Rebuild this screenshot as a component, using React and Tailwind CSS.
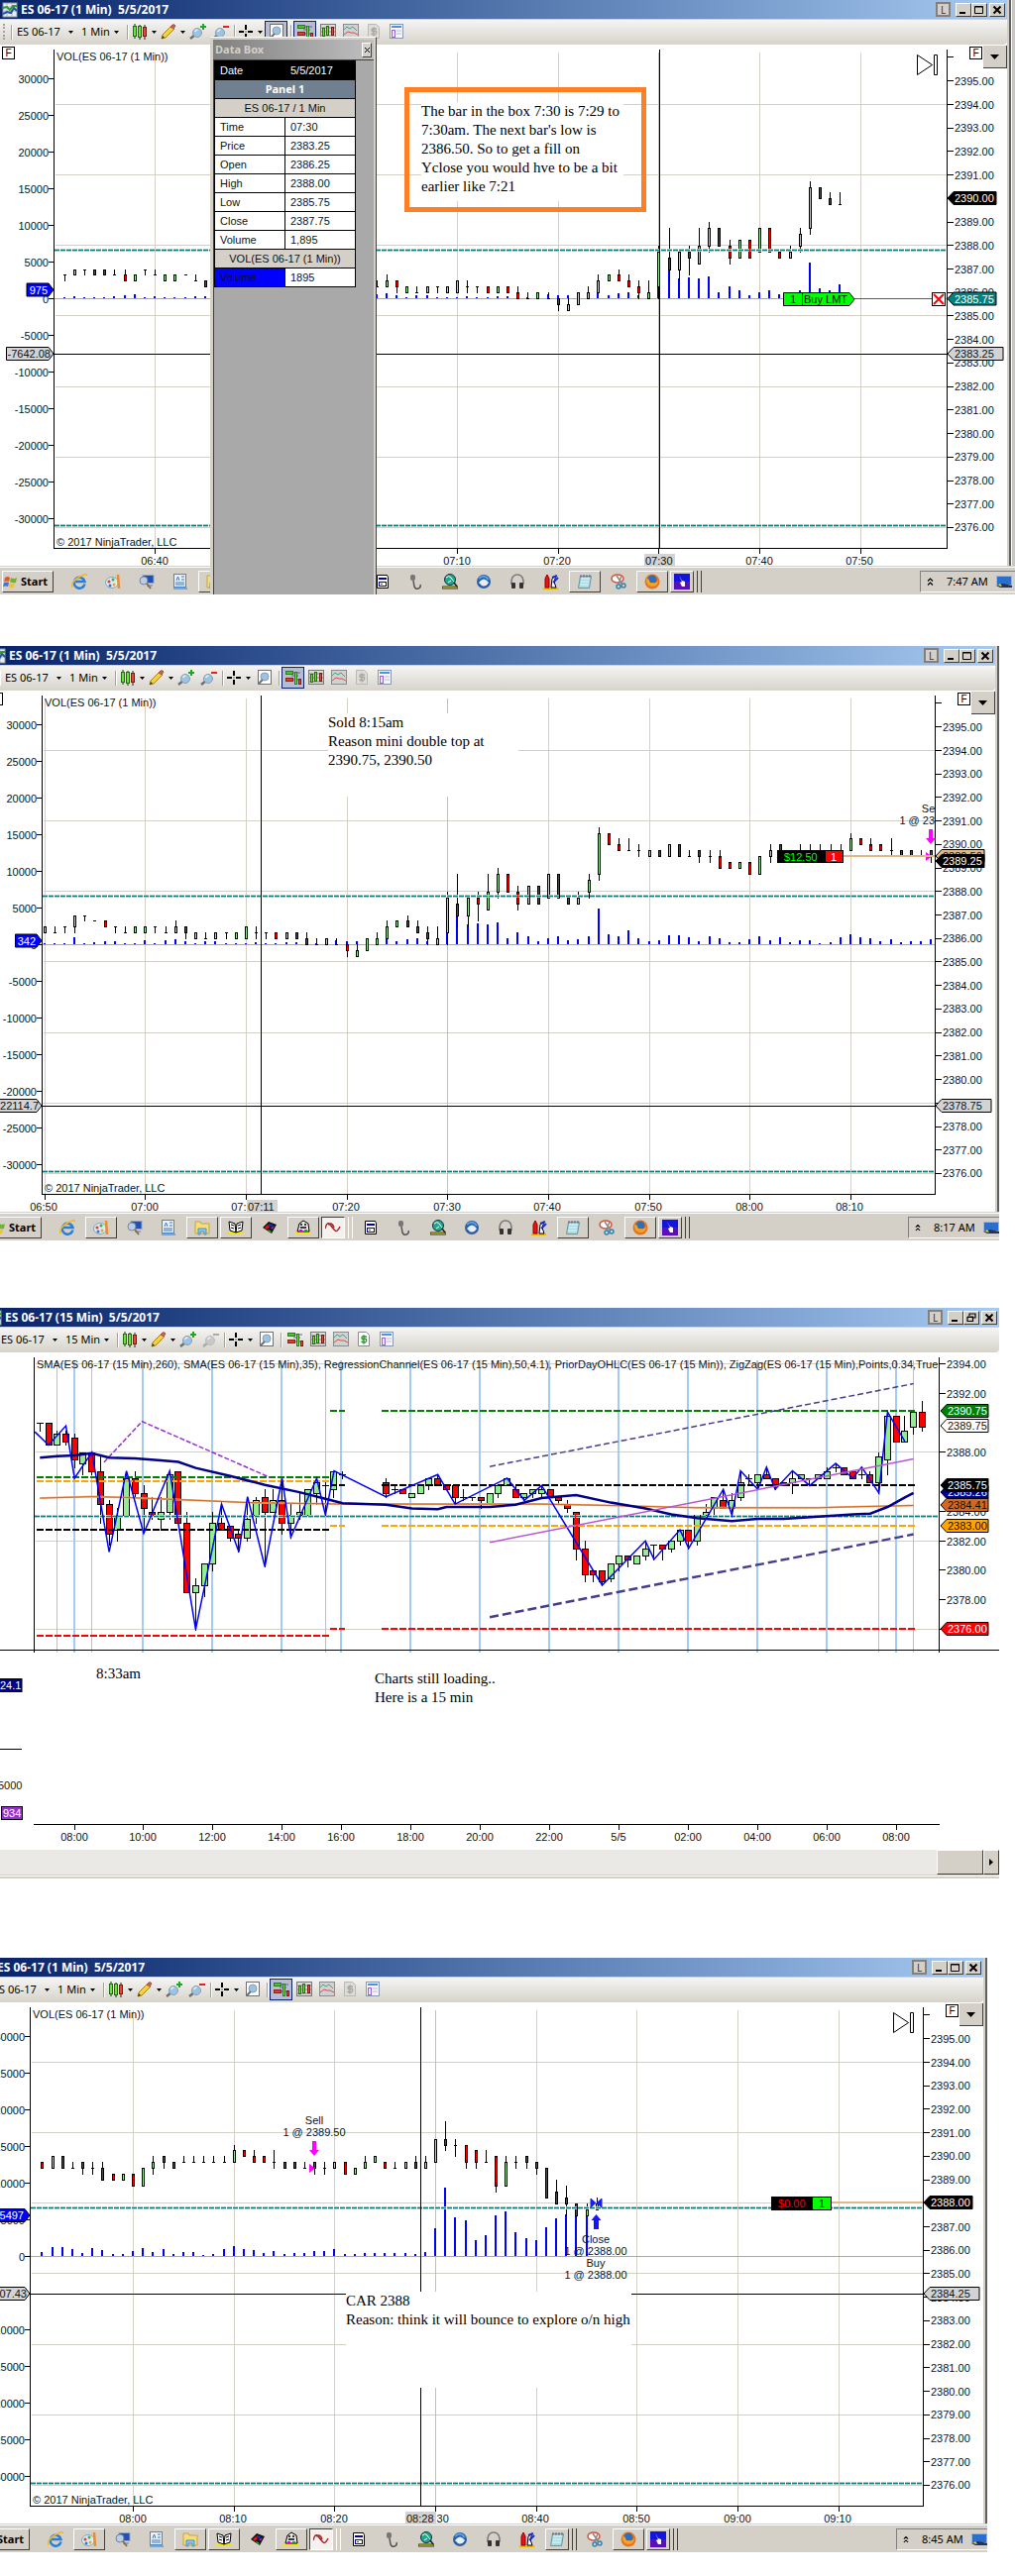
import React from "react";

// ---------------------------------------------------------------- data

// one minute bars, 06:31 - 08:46: [open, high, low, close, volume height], prices above 2380
const START = 391;
const minuteBars = [
  [6.75, 6.75, 6.5, 6.75, 1], [6.75, 7, 6.75, 7, 2], [7, 7, 6.75, 7, 1], [7, 7, 6.75, 6.75, 1], [7, 7, 6.75, 6.75, 1],
  [6.75, 7, 6.75, 6.75, 2], [6.75, 7, 6.5, 6.5, 3], [6.5, 6.75, 6.5, 6.75, 4], [7, 7, 6.75, 7, 1], [6.75, 7, 6.75, 6.75, 2],
  [6.5, 6.75, 6.5, 6.75, 1], [6.5, 6.75, 6.5, 6.75, 1], [6.75, 6.75, 6.75, 6.75, 1], [6.5, 6.75, 6.5, 6.5, 2], [6.5, 6.5, 6.25, 6.25, 2],
  [6.25, 6.5, 6.25, 6.5, 1], [6.5, 6.5, 6.25, 6.25, 1], [6.25, 6.5, 6.25, 6.5, 1], [6.5, 6.5, 6.25, 6.25, 1], [6.25, 6.5, 6.25, 6.5, 1],
  [6.25, 6.5, 6.25, 6.25, 1], [6.5, 6.5, 6.25, 6.5, 1], [6.5, 7, 6.25, 7, 7], [7, 7, 6.75, 7, 1], [6.75, 6.75, 6.75, 6.75, 2],
  [6.75, 6.75, 6.5, 6.5, 3], [6.5, 6.5, 6.25, 6.5, 3], [6.25, 6.5, 6.25, 6.25, 1], [6.25, 6.5, 6.25, 6.5, 1], [6.25, 6.5, 6.25, 6.5, 4],
  [6.5, 6.5, 6.25, 6.5, 1], [6.25, 6.5, 6.25, 6.25, 4], [6.25, 6.75, 6.25, 6.5, 5], [6.5, 6.5, 6, 6.25, 3], [6, 6.25, 6, 6.25, 1],
  [6, 6.25, 6, 6, 3], [6, 6.25, 6, 6.25, 3], [6.25, 6.25, 6, 6.25, 1], [6, 6.25, 6, 6.25, 1], [6, 6.5, 6, 6.5, 1],
  [6.25, 6.5, 6, 6.25, 2], [6.25, 6.25, 6, 6.25, 1], [6.25, 6.25, 6, 6, 1], [6, 6.25, 6, 6.25, 2], [6.25, 6.25, 6, 6, 2],
  [6, 6.25, 5.75, 5.75, 1], [5.75, 6, 5.75, 5.75, 1], [5.75, 6, 5.75, 6, 1], [5.75, 6, 5.75, 5.75, 4], [5.75, 5.75, 5.25, 5.5, 3],
  [5.25, 5.75, 5.25, 5.5, 3], [5.5, 6, 5.5, 6, 3], [5.75, 6.25, 5.75, 6, 3], [6, 6.75, 6, 6.5, 5], [6.5, 6.75, 6.5, 6.75, 3],
  [6.75, 7, 6.5, 6.5, 5], [6.5, 6.75, 6.25, 6.25, 6], [6.25, 6.5, 5.75, 6, 3], [5.75, 6.5, 5.75, 6, 3], [6.25, 8, 5.75, 7.75, 11],
  [7.5, 8.75, 6.5, 7, 29], [7, 7.75, 6.5, 7.75, 20], [7.75, 8, 6.75, 7.5, 21], [7.25, 8.75, 7.25, 8, 20], [8, 9, 7.75, 8.75, 22],
  [8.75, 8.75, 8, 8, 6], [8, 8.25, 7.25, 7.5, 12], [7.5, 8.25, 7.5, 8.25, 8], [8.25, 8.25, 7.5, 7.5, 3], [7.75, 8.75, 7.75, 8.75, 6],
  [8.75, 8.75, 7.75, 7.75, 8], [7.75, 7.75, 7.5, 7.5, 4], [7.5, 8, 7.5, 7.75, 5], [8, 8.75, 7.75, 8.5, 8], [8.75, 10.75, 8.5, 10.5, 36],
  [10.5, 10.5, 10, 10, 10], [10, 10.25, 9.75, 9.75, 8], [9.75, 10.25, 9.75, 9.75, 14], [9.75, 10, 9.5, 9.75, 6], [9.5, 9.75, 9.5, 9.75, 3],
  [9.75, 9.75, 9.5, 9.5, 4], [9.5, 10, 9.5, 10, 9], [10, 10, 9.5, 9.5, 9], [9.5, 9.75, 9.5, 9.5, 7], [9.75, 9.75, 9.25, 9.5, 3],
  [9.5, 9.75, 9.25, 9.5, 8], [9.5, 9.75, 9, 9, 6], [9.25, 9.25, 9, 9, 2], [9, 9.25, 9, 9.25, 2], [9.25, 9.25, 8.75, 8.75, 5],
  [8.75, 9.5, 8.75, 9.5, 8], [9.5, 10, 9.25, 9.75, 4], [10, 10, 9.5, 9.75, 7], [9.75, 9.75, 9.5, 9.5, 2], [9.75, 10, 9.75, 9.75, 4],
  [9.75, 10, 9.75, 9.75, 4], [9.75, 10, 9.75, 9.75, 1], [9.75, 10, 9.75, 9.75, 2], [9.75, 10, 9.75, 9.75, 7], [9.75, 10.5, 9.75, 10.25, 10],
  [10.25, 10.25, 10, 10, 7], [10, 10.25, 9.75, 9.75, 6], [10, 10, 9.75, 9.75, 3], [9.75, 10.25, 9.5, 9.75, 5], [9.75, 9.75, 9.5, 9.5, 2],
  [9.75, 9.75, 9.5, 9.5, 3], [9.5, 9.75, 9.5, 9.5, 3], [9.75, 9.75, 9.25, 9.5, 5], [9.5, 9.75, 9.25, 9.5, 5], [9.5, 9.75, 9.5, 9.75, 7],
  [9.75, 9.75, 9.25, 9.25, 2], [9.25, 9.5, 9.25, 9.5, 2], [9.5, 10, 9.5, 9.75, 3], [9.75, 10, 9.75, 10, 3], [9.75, 9.75, 9.5, 9.5, 3],
  [9.5, 9.75, 9.5, 9.5, 3], [9.5, 9.75, 9.5, 9.75, 3], [9.75, 10, 9.5, 9.5, 2], [9.5, 10, 9.5, 9.75, 4], [9.75, 10.75, 9.75, 10.75, 28],
  [10.75, 11.5, 10.25, 10.5, 69], [10.5, 10.75, 10, 10.5, 39], [10.5, 10.5, 9.5, 9.75, 36], [10.25, 10.25, 9.5, 9.75, 16], [9.75, 10.25, 9.75, 9.75, 21],
  [10, 10, 8.5, 8.75, 41], [8.75, 10, 8.75, 9.75, 45], [9.75, 10, 9.5, 9.75, 24], [10, 10, 9.5, 9.75, 18], [9.75, 9.75, 9.25, 9.5, 16],
  [9.5, 9.5, 8.25, 8.25, 29], [8.5, 9, 8, 8, 38], [8.25, 8.75, 7.5, 8, 42], [8, 8, 7.25, 7.5, 42], [7.5, 8, 7.5, 7.75, 42],
  [7.75, 8.25, 7.75, 8, 0],
];

// fifteen minute bars: [slot, open, high, low, close], prices above 2380
const quarterBars = [
  [0, 10, 10, 9.5, 10], [1, 10, 10, 8.5, 8.5], [2, 8.5, 9.5, 8.5, 9.25], [3, 9.25, 9.5, 8.5, 8.75], [4, 9, 9.25, 7, 7.5],
  [5, 7.25, 8, 6.5, 8], [6, 8, 8, 6.5, 6.75], [7, 6.75, 7.75, 3.25, 4.5], [8, 4.5, 4.75, 1.75, 2.5], [9, 2.75, 4.25, 2, 3.75],
  [10, 3.75, 6.75, 3.75, 6.25], [11, 6.25, 6.75, 5, 5.25], [12, 5.25, 5.75, 2.75, 4.25], [13, 4, 5, 3.5, 3.75], [14, 3.5, 5, 2.75, 4],
  [15, 4, 6.75, 3.5, 6.5], [16, 6.75, 6.75, 3.25, 3.25], [17, 3.25, 4, -1.5, -1.5], [18, -1.5, -0.5, -4, -1], [19, -1, 0.5, -1.75, 0.5],
  [20, 0.5, 4, 0, 3.25], [21, 3.25, 4.5, 2.75, 2.75], [22, 3, 3, 2, 2.25], [23, 2.5, 2.75, 1.25, 2.25], [24, 2.25, 5, 2, 3.5],
  [25, 3.75, 5, 3.25, 4.75], [26, 5, 5.5, 0.25, 4], [27, 4, 5.5, 4, 4.75], [28, 4.75, 6.25, 2.5, 3.25], [29, 3.25, 4.5, 2.25, 3.75],
  [30, 3.75, 5.25, 3.5, 4], [31, 3.75, 5.5, 3.75, 5.5], [32, 5.25, 6.25, 4.5, 6], [33, 5.75, 6, 3.75, 5.75], [34, 5.5, 6.75, 5, 6.75],
  [35, 6.5, 6.75, 6.25, 6.5], [40, 6, 6.25, 5, 5.25], [41, 5.5, 5.75, 5.25, 5.5], [42, 5.5, 5.5, 5.25, 5.25], [43, 5, 5.25, 5, 5.25],
  [44, 5.25, 5.75, 5.25, 5.75], [45, 5.75, 6.25, 5.5, 6.25], [46, 6.25, 6.5, 5.75, 5.75], [47, 5.75, 5.75, 5.5, 5.5], [48, 5.75, 5.75, 4.5, 5],
  [49, 5, 5.5, 4.75, 5], [50, 5, 5, 4.75, 5], [51, 5, 5, 4.25, 4.75], [52, 4.5, 5.25, 4.5, 5.25], [53, 5.25, 5.75, 5, 5.75],
  [54, 5.75, 6.25, 5.75, 6.25], [55, 5.5, 5.75, 5, 5], [56, 5, 5.25, 4.75, 5.25], [57, 5.25, 5.5, 5, 5.5], [58, 5.25, 5.75, 5, 5.5],
  [59, 5.5, 5.5, 5, 5], [60, 5, 5, 4.5, 4.75], [61, 4.5, 4.75, 4, 4.25], [62, 4, 4, 0.75, 1.5], [63, 1.5, 2, -0.75, -0.25],
  [64, 0, 0, -0.75, -0.25], [65, 0, 0, -1, -0.75], [66, -0.5, 0.5, -0.75, 0.5], [67, 0.5, 1, 0, 1], [68, 1, 1, 0.25, 0.75],
  [69, 0.5, 1, 0.5, 1], [70, 1, 2, 0.75, 1.5], [71, 1.75, 1.75, 0.75, 1.75], [72, 1.75, 1.75, 0.75, 1.5], [73, 1.5, 2, 1.25, 2],
  [74, 2, 2.75, 1.75, 2.75], [75, 2.75, 2.75, 1.5, 2], [76, 2, 3.75, 1.75, 3.75], [77, 3.75, 4.5, 3.75, 4], [78, 4.25, 5, 3.75, 5],
  [79, 4.75, 5.5, 4.25, 4.25], [80, 4.25, 5.25, 3.75, 4.75], [81, 5, 6.75, 4.75, 6], [82, 6.25, 6.5, 5.75, 6.25], [83, 6, 6.5, 5.5, 6.5],
  [84, 6.5, 7, 6.25, 6.25], [85, 6.25, 6.25, 5.5, 5.75], [86, 6, 6, 5.75, 5.75], [87, 6, 6.75, 5.25, 6.25], [88, 6.25, 6.5, 6.25, 6.5],
  [89, 6.25, 6.25, 5.75, 6.25], [90, 6.25, 6.5, 6.25, 6.5], [91, 6.25, 7, 6.25, 6.75], [92, 7, 7.25, 6.75, 7], [93, 7, 7, 6.5, 6.5],
  [94, 6.75, 6.75, 6.25, 6.25], [95, 6.5, 7, 6.25, 6.5], [96, 6.5, 6.75, 6, 6], [97, 6, 8, 5.25, 7.75], [98, 7.5, 10.75, 6.5, 10.5],
  [99, 10.5, 10.5, 8.75, 8.75], [100, 8.75, 10.5, 8.75, 9.5], [101, 9.75, 10.75, 9.25, 10.75], [102, 10.75, 11.5, 9.5, 9.75],
];

const zigzag = [
  [-0.6, 9.4], [1, 8.5], [3, 9.8], [4, 6.25], [6, 8], [8, 1.25], [10, 6.75], [12, 2.5], [15, 6.75], [18, -4], [21, 4.5], [23, 1.25],
  [24, 5], [26, 0.25], [28, 6.25], [29, 2.25], [32, 6.25], [33, 3.75], [34, 6.75], [40, 5], [46, 6.5], [48, 4.5], [54, 6.25],
  [56, 4.75], [58, 5.75], [65, -1], [70, 2], [71, 0.75], [74, 2.75], [75, 1.5], [79, 5.5], [80, 3.75], [81, 6.75], [83, 5.5],
  [84, 7], [85, 5.5], [87, 6.75], [89, 5.75], [92, 7.25], [94, 6.25], [95, 7], [97, 5.25], [98, 10.75], [100, 8.75],
];
const fastAverage = [
  [0, 7.65], [2, 7.75], [4, 7.8], [6, 7.95], [8, 7.65], [11, 7.6], [14, 7.45], [16, 7.35], [18, 6.95], [22, 6.4], [26, 5.8],
  [30, 5.3], [33, 4.85], [35, 4.55], [40, 4.45], [43, 4.2], [46, 4.15], [47, 4.3], [52, 4.3], [55, 4.45], [58, 4.9], [62, 5.1],
  [66, 4.6], [70, 4.2], [73, 3.8], [76, 3.55], [80, 3.35], [83, 3.5], [86, 3.5], [90, 3.65], [94, 3.8], [96, 3.85], [98, 4.3],
  [100, 4.95], [101, 5.25],
];
const slowAverage = [
  [0, 4.9], [6, 5], [10, 4.95], [18, 4.75], [24, 4.6], [35, 4.5], [58, 4.5], [66, 4.4], [76, 4.25], [90, 4.25], [93, 4.3], [101, 4.4],
];

const dataRows = [
  ["Time", "07:30"],
  ["Price", "2383.25"],
  ["Open", "2386.25"],
  ["High", "2388.00"],
  ["Low", "2385.75"],
  ["Close", "2387.75"],
  ["Volume", "1,895"],
];

// ---------------------------------------------------------------- toolbar

const Caret = () => (
  <svg width="5" height="3" viewBox="0 0 5 3" className="shrink-0" aria-hidden="true">
    <path d="M0 0h5L2.5 3z" fill="#000" />
  </svg>
);

const Sep = () => <span className="h-[15px] w-[2px] shrink-0 border-l border-[#a5a29b] bg-white" />;

const Icon = ({ children, w = 16 }) => (
  <svg width={w} height="16" viewBox={`0 0 ${w} 16`} className="shrink-0" aria-hidden="true">
    {children}
  </svg>
);

const AppIcon = () => (
  <Icon>
    <rect x="1" y="1" width="14" height="14" fill="#e9edf2" stroke="#8b98a8" />
    <path d="M1 5h14M1 9h14M5 1v14M10 1v14" stroke="#a9b6c4" />
    <path d="M1 6l4-1 3 3 3-4 4 0" stroke="#2aa12a" strokeWidth="2" fill="none" />
    <path d="M1 12l4-2 4 1 3-5 3 3" stroke="#2a4fa8" strokeWidth="2" fill="none" />
  </Icon>
);

const CandlesIcon = () => (
  <Icon>
    <path d="M3 0v15M8 1v15M13 1v15" stroke="#222" />
    <rect x="1.5" y="2.5" width="3" height="10" fill="#6fe23c" stroke="#226b12" />
    <rect x="6.5" y="2.5" width="3" height="11" fill="#6fe23c" stroke="#226b12" />
    <rect x="11.5" y="3.5" width="3" height="9" fill="#e8483c" stroke="#7a1a12" />
  </Icon>
);

const PencilIcon = () => (
  <Icon>
    <path d="M1 15l1-4L11 2l3 3-9 9z" fill="#f6d23a" stroke="#a3801a" />
    <path d="M10 3l2-2q2-1 3 1l-2 3z" fill="#e2584a" stroke="#98584a" />
    <path d="M1 15l1-3 2 2z" fill="#333" />
  </Icon>
);

const ZoomIcon = ({ plus, dim }) => (
  <Icon w={17}>
    <path d="M1 15l5-4" stroke={dim ? "#aaa" : "#6b6f73"} strokeWidth="2.5" />
    <circle cx="8" cy="9" r="4.5" fill={dim ? "#c9c9c9" : "#9cc3e4"} stroke={dim ? "#b9b9b9" : "#8c9cab"} />
    <path d="M5.500 8q1-2 3-2" stroke="#e6f1fa" strokeWidth="1.500" fill="none" />
    {plus ? (
      <path d="M14 0v6M11 3h6" stroke="#1ba81b" strokeWidth="2" />
    ) : (
      <path d="M11 3h6" stroke={dim ? "#aaa" : "#f01c1c"} strokeWidth="2" />
    )}
  </Icon>
);

const CrossIcon = () => (
  <Icon>
    <path d="M8 1v5M8 10v5M1 8h5M10 8h5" stroke="#000" strokeWidth="2" />
    <rect x="7.500" y="7.500" width="1" height="1" fill="#000" />
  </Icon>
);

const PageZoomIcon = () => (
  <Icon>
    <rect x="1.5" y="0.5" width="13" height="14" fill="#fff" stroke="#6e7276" />
    <circle cx="8" cy="7" r="4" fill="#9cc3e4" stroke="#8c9cab" />
    <path d="M2 14l4-4" stroke="#6b6f73" strokeWidth="2" />
  </Icon>
);

const TraderIcon = () => (
  <Icon>
    <path d="M0 3h15M0 10h15M6 6h7" stroke="#667" />
    <rect x="0.5" y="1.5" width="7" height="3" fill="#48c431" stroke="#2a7a1e" />
    <rect x="0.5" y="8.5" width="7" height="3" fill="#e03a2c" stroke="#8d2018" />
    <rect x="9.5" y="2.5" width="2" height="12" fill="#6fe23c" stroke="#2a7a1e" />
    <rect x="13.5" y="9.5" width="2" height="5" fill="#e8483c" stroke="#7a1a12" />
  </Icon>
);

const PanelCandlesIcon = () => (
  <Icon>
    <rect x="0.5" y="0.5" width="15" height="14" fill="#dcdcdc" stroke="#777" />
    <path d="M0 4h15M0 8h15M0 12h15" stroke="#888" />
    <rect x="2.5" y="4.5" width="2" height="8" fill="#6fe23c" stroke="#226b12" />
    <rect x="6.5" y="2.5" width="2" height="9" fill="#6fe23c" stroke="#226b12" />
    <rect x="11.5" y="3.5" width="2" height="8" fill="#e8483c" stroke="#7a1a12" />
  </Icon>
);

const IndicatorIcon = () => (
  <Icon>
    <rect x="0.5" y="0.5" width="15" height="14" fill="#cfd2d3" stroke="#8a8d90" />
    <path d="M1 6l3-3 3 2 3-2 4 4" stroke="#44a57a" fill="none" />
    <path d="M1 11l4-3 3 1 3 0 4 2" stroke="#dc4f4f" fill="none" />
  </Icon>
);

const AccountIcon = ({ on }) => (
  <svg width="14" height="16" viewBox="0 0 14 16" className="shrink-0" aria-hidden="true">
    <path d="M1.500 .5h8l3 3v11h-11z" fill={on ? "#fff" : "#dedcd8"} stroke={on ? "#8a8d90" : "#bab8b3"} />
    <path
      d="M10 5.500q-5-2-5 .5t2.500 1.500 2 2-5 .5M7 3.500v9"
      stroke={on ? "#2f9b2f" : "#aaa7a1"}
      strokeWidth="1.500"
      fill="none"
    />
  </svg>
);

const LayoutIcon = () => (
  <Icon>
    <rect x="1.5" y="0.5" width="13" height="14" fill="#f4f6fa" stroke="#8a97ad" />
    <rect x="3" y="2" width="10" height="2" fill="#4a96dc" />
    <rect x="3.500" y="6.500" width="3" height="7" fill="#eee2fb" stroke="#9a62d8" />
    <path d="M8 7h5M8 10h5" stroke="#b8bfc9" />
  </Icon>
);

const ToolButton = ({ label, active, caret, children }) => (
  <button
    type="button"
    aria-label={label}
    className={
      active
        ? "flex h-[22px] w-[23px] items-center justify-center border border-[#0a246a] bg-[#b6bdd2]"
        : "flex h-[22px] min-w-[23px] items-center justify-center gap-1"
    }
  >
    {children}
    {caret && <Caret />}
  </button>
);

const ToolSelect = ({ label, value, width }) => (
  <label className="flex items-center gap-1">
    <select
      aria-label={label}
      defaultValue={value}
      className={`${width} cursor-default appearance-none bg-transparent p-0 text-[11px] leading-4 text-black`}
    >
      <option>{value}</option>
    </select>
    <Caret />
  </label>
);

const Toolbar = ({ period, shift, magnifier, trader, account }) => (
  <div className="h-[25px] overflow-hidden rounded-r-sm bg-linear-to-b from-[#f6f5f3] to-[#d6d3cb]">
    <div className={`${shift} flex h-[24px] items-center`}>
      <span className="ml-[3px] h-[16px] border-l-2 border-dotted border-[#a5a29b]" />
      <span className="ml-1.5">
        <span className="block h-[15px] w-[2px] border-l border-[#a5a29b] bg-white" />
      </span>
      <div className="ml-1 flex items-center gap-2">
        <ToolSelect label="Instrument" value="ES 06-17" width="w-[48px]" />
        <ToolSelect label="Interval" value={period} width={period === "1 Min" ? "w-[29px]" : "w-[35px]"} />
      </div>
      <div className="ml-2 flex items-center">
        <Sep />
        <div className="flex items-center gap-1 pl-[3px]">
          <ToolButton label="Chart style" caret><CandlesIcon /></ToolButton>
          <ToolButton label="Drawing tools" caret><PencilIcon /></ToolButton>
        </div>
        <div className="ml-px flex items-center">
          <ToolButton label="Zoom in"><ZoomIcon plus /></ToolButton>
          <ToolButton label="Zoom out"><ZoomIcon dim={account} /></ToolButton>
        </div>
      </div>
      <div className="ml-[2px] flex items-center">
        <Sep />
        <div className="flex items-center gap-[2px] pl-[2px]">
          <ToolButton label="Crosshair" caret><CrossIcon /></ToolButton>
          <ToolButton label="Data box" active={magnifier}><PageZoomIcon /></ToolButton>
        </div>
      </div>
      <div className="ml-[3px] flex items-center">
        <Sep />
        <div className="ml-px flex items-center">
          <ToolButton label="Chart trader" active={trader}><TraderIcon /></ToolButton>
          <ToolButton label="Data series"><PanelCandlesIcon /></ToolButton>
          <ToolButton label="Indicators"><IndicatorIcon /></ToolButton>
          <ToolButton label="Strategies"><AccountIcon on={account} /></ToolButton>
          <ToolButton label="Properties"><LayoutIcon /></ToolButton>
        </div>
      </div>
    </div>
  </div>
);

// ---------------------------------------------------------------- window frame

const CaptionButton = ({ label, children }) => (
  <button
    type="button"
    aria-label={label}
    className="flex h-[14px] w-[16px] items-center justify-center border border-t-white border-r-[#404040] border-b-[#404040] border-l-white bg-[#d4d0c8]"
  >
    <svg width="10" height="10" viewBox="0 0 10 10" fill="none" stroke="#000" aria-hidden="true">
      {children}
    </svg>
  </button>
);

const TitleBar = ({ title, shift, restore }) => (
  <div className="h-[20px] overflow-hidden border-b border-[#d4d0c8] bg-linear-to-r from-[#0a246a] to-[#a6caf0]">
    <div className="flex h-[19px] items-center pr-[2px]">
      <h2 className={`${shift} flex items-center gap-[3px] pl-[2px] text-[12px] leading-4 font-bold whitespace-pre text-white`}>
        <AppIcon />
        {title}
      </h2>
      <div className="ml-auto flex items-center">
        <button
          type="button"
          className="mr-[5px] flex h-[15px] w-[15px] items-center justify-center border-2 border-[#808080] bg-[#d4d0c8] text-[10px] leading-none text-[#333]"
        >
          L
        </button>
        <CaptionButton label="Minimize">
          <path d="M1 8h6" strokeWidth="2" />
        </CaptionButton>
        <CaptionButton label="Maximize">
          {restore ? (
            <path d="M3 3V1h6v4H7M1 4.500h5.500v4H1zM1 4h6" strokeWidth="1.200" />
          ) : (
            <path d="M.5 1.500h8v7h-8zM.5 2h8" />
          )}
        </CaptionButton>
        <span className="w-[2px]" />
        <CaptionButton label="Close">
          <path d="M1.500 1.500l7 7M8.500 1.500l-7 7" strokeWidth="2" />
        </CaptionButton>
      </div>
    </div>
  </div>
);

const FixedButton = ({ className }) => (
  <button
    type="button"
    aria-label="Fixed scale"
    className={`${className} absolute top-[2px] flex h-[13px] w-[13px] items-center justify-center border border-black bg-white font-['Liberation_Sans',Arial,sans-serif] text-[10px] leading-none text-black`}
  >
    F
  </button>
);

const ChartMenuButton = () => (
  <button
    type="button"
    aria-label="Chart menu"
    className="absolute top-px right-0 flex h-[23px] w-[24px] items-center justify-center border-r border-b border-[#404040] bg-[#d4d0c8]"
  >
    <svg width="9" height="5" viewBox="0 0 9 5" aria-hidden="true">
      <path d="M0 0h9L4.500 5z" fill="#000" />
    </svg>
  </button>
);

// ---------------------------------------------------------------- chart parts

const FONT = "'Liberation Sans', Arial, sans-serif";
const priceY = (p) => 105.5 + (14 - p) * 23.72;
const volumeY = (v) => 301.5 - (v / 5000) * 37;

// one pixel rules
const HLine = ({ x, y, w, color = "#000" }) => <rect x={x} y={y} width={w} height="1" fill={color} />;
const VLine = ({ x, y, h, color = "#000" }) => <rect x={x} y={y} width="1" height={h} fill={color} />;

const Candle = ({ x, o, h, l, c, y, half }) => {
  const top = Math.round(y(Math.max(o, c)));
  const bottom = Math.round(y(Math.min(o, c)));
  const high = Math.round(y(h));
  const low = Math.round(y(l));
  const cx = Math.floor(x);
  return (
    <g>
      <rect x={cx} y={high} width="1" height={low - high + 1} fill="#000" />
      <rect x={cx - half} y={top} width={half * 2 + 1} height={bottom - top + 1} fill="#000" />
      {bottom - top > 1 && (
        <rect
          x={cx - half + 1}
          y={top + 1}
          width={half * 2 - 1}
          height={bottom - top - 1}
          fill={c > o ? "#90ee90" : "#ff0000"}
        />
      )}
    </g>
  );
};

const RightTag = ({ x, y, text, fill, color, wide = 50 }) => (
  <g>
    <path d={`M${x + 1} ${y}l6-6.500h${wide - 7}v13h${7 - wide}z`} fill={fill} stroke="#000" />
    <text x={x + 8} y={y + 4} fill={color}>{text}</text>
  </g>
);

const LeftTag = ({ y, left, text, fill, color, end = 51 }) => (
  <g>
    <path d={`M54 ${y}l-5-6.500H${left}v13H49z`} fill={fill} stroke="#000" />
    <text x={end} y={y + 4} textAnchor="end" fill={color}>{text}</text>
  </g>
);

const Dashes = ({ y, x1 = 55, x2 = 955 }) => (
  <g fill="none">
    <path d={`M${x1} ${y}H${x2}`} stroke="#9ccfcc" strokeWidth="3" strokeDasharray="5 1" />
    <path d={`M${x1} ${y}H${x2}`} stroke="#008080" strokeDasharray="5 1" />
  </g>
);

const SkipIcon = () => (
  <g fill="#fff" stroke="#000">
    <path d="M925.500 55.500v20l15-10z" />
    <path d="M942.500 55.500h3v20h-3z" />
  </g>
);

const DownArrow = ({ x, y }) => (
  <path d={`M${x - 2} ${y}h4v9h3l-5 6-5-6h3z`} fill="#ff00ff" />
);

const SellMark = ({ x }) => (
  <g>
    <text x={x} y="168" textAnchor="middle">Sell</text>
    <text x={x} y="180" textAnchor="middle">1 @ 2389.50</text>
    <DownArrow x={x} y={185} />
    <path d={`M${x - 5} 208v9l6-4.500z`} fill="#ff00ff" />
  </g>
);

const MinuteChart = ({ offset, width, base, first, last, ticks, cross, crossTime, left, tip, children }) => {
  const timeX = (m) => base + (m - 480) * 10.1667;
  const bars = minuteBars.map((b, i) => [START + i, ...b]).filter((b) => b[0] >= first && b[0] <= last);
  return (
    <svg
      viewBox={`${offset} 45 ${width} 526`}
      className="block h-auto w-full"
      fontFamily={FONT}
      fontSize="11"
      role="img"
      aria-label="ES 06-17 one minute price and volume"
    >
      <g shapeRendering="crispEdges">
        {[14, 11, 8, 5, 2, -1, -4].map((p) => (
          <HLine key={p} x={56} y={Math.floor(priceY(p))} w={899} color="#d4d0c8" />
        ))}
        {ticks.map(([m]) => (
          <VLine key={m} x={Math.floor(timeX(m))} y={53} h={500} color={m % 60 === 30 ? "#c0c0c0" : "#d4d0c8"} />
        ))}
        <HLine x={55} y={301} w={900} color="#a9a9a9" />
      </g>

      <g shapeRendering="crispEdges">
        {bars.map(([m, , , , , v]) => (
          <rect key={m} x={Math.floor(timeX(m)) - 1} y={301 - v} width="2" height={v} fill="#0000ff" />
        ))}
        {bars.map(([m, o, h, l, c]) => (
          <Candle key={m} x={timeX(m)} o={o} h={h} l={l} c={c} y={priceY} half={1} />
        ))}
        <Dashes y={252.5} />
        <Dashes y={530.5} />
        <VLine x={54} y={50} h={504} />
        <VLine x={955} y={50} h={504} />
        <HLine x={54} y={553} w={902} />
        <HLine x={956} y={57} w={6} />
        <VLine x={cross[0]} y={50} h={503} />
        <HLine x={55} y={cross[1]} w={900} />
        {ticks.map(([m]) => (
          <VLine key={m} x={Math.floor(timeX(m))} y={554} h={5} />
        ))}
        {Array.from({ length: 20 }, (_, i) => 15 - i).map((p) => (
          <HLine key={p} x={956} y={Math.floor(priceY(p))} w={6} />
        ))}
        {Array.from({ length: 13 }, (_, i) => 30000 - i * 5000).map((v) => (
          <HLine key={v} x={49} y={Math.floor(volumeY(v))} w={5} />
        ))}
      </g>

      <g fill="#111">
        <text x="57" y="61">VOL(ES 06-17 (1 Min))</text>
        <text x="57" y="551">© 2017 NinjaTrader, LLC</text>
        {Array.from({ length: 20 }, (_, i) => 15 - i).map((p) => (
          <text key={p} x="963" y={Math.round(priceY(p)) + 4}>{(2380 + p).toFixed(2)}</text>
        ))}
        {Array.from({ length: 13 }, (_, i) => 30000 - i * 5000).map((v) => (
          <text key={v} x="49" y={Math.round(volumeY(v)) + 4} textAnchor="end">{v}</text>
        ))}
        {ticks.map(([m, label]) => (
          <text key={m} x={Math.round(timeX(m)) - 1} y="570" textAnchor="middle">{label}</text>
        ))}
        <rect x={crossTime[0]} y="559" width="31" height="13" fill="#d3d3d3" />
        <text x={crossTime[0] + 1} y="570">{crossTime[1]}</text>
        {children}
        <LeftTag y={left[0]} left={left[1]} text={left[2]} fill="#0000ff" color="#fff" end={48} />
        <LeftTag y={cross[1]} left={tip[0]} text={tip[1]} fill="#d3d3d3" color="#111" />
        <RightTag x={955} y={cross[1]} text={tip[2]} fill="#d3d3d3" color="#111" wide={57} />
      </g>
    </svg>
  );
};

// ---------------------------------------------------------------- fifteen minute chart

const slotX = (i) => 40.3 + i * 8.726;
const quarterY = (p) => 56.6 + (14 - p) * 14.89;
const line = (pts) => pts.map(([i, p]) => `${slotX(i).toFixed(1)},${quarterY(p).toFixed(1)}`).join(" ");

const hourLines = [75, 144, 214, 284, 344, 414, 484, 554, 624, 694, 764, 834, 904];
const hourLabels = ["08:00", "10:00", "12:00", "14:00", "16:00", "18:00", "20:00", "22:00", "5/5", "02:00", "04:00", "06:00", "08:00"];
const sessionLines = [57, 92, 328, 886, 921];

const DayLine = ({ before, after, color }) => (
  <g stroke={color} strokeWidth="2" strokeDasharray="7 2" fill="none">
    {before && <path d={`M37 ${before}H332`} />}
    <path d={`M333 ${after}H348`} />
    <path d={`M385 ${after}H925`} />
  </g>
);

const QuarterChart = () => (
  <svg
    viewBox="0 45 1008 502"
    className="block h-auto w-full"
    fontFamily={FONT}
    fontSize="11"
    role="img"
    aria-label="ES 06-17 fifteen minute price"
  >
    <g shapeRendering="crispEdges">
      {[56, 145, 235, 324].map((y) => (
        <HLine key={y} x={36} y={y} w={911} color="#d4d0c8" />
      ))}
      {sessionLines.map((x) => (
        <VLine key={x} x={x} y={53} h={295} color="#c0c0c0" />
      ))}
      {hourLines.map((x) => (
        <rect key={x} x={x - 1} y="53" width="2" height="295" fill="#a6caf0" />
      ))}
      {quarterBars.map(([i, o, h, l, c]) => (
        <Candle key={i} x={slotX(i)} o={o} h={h} l={l} c={c} y={quarterY} half={3} />
      ))}
      <Dashes y={210.5} x1={35} x2={947} />
      <DayLine before={171} after={104} color="#008000" />
      <DayLine before={175} after={220} color="#ffa500" />
      <DayLine before={224} after={179} color="#000" />
      <DayLine before={331} after={324} color="#ff0000" />
    </g>

    <g fill="none">
      <polyline points={line(slowAverage)} stroke="#f0b080" strokeWidth="2" />
      <polyline points={line(slowAverage)} stroke="#d2691e" />
      <polyline points={line([[7.4, 7.33], [11.8, 10.1], [26.6, 6.3]])} stroke="#9932cc" strokeWidth="1.500" strokeDasharray="5 2" />
      <polyline points={line([[52, 7.04], [101, 12.66]])} stroke="#483d8b" strokeWidth="1.500" strokeDasharray="6 3" />
      <polyline points={line([[52, -3.17], [101, 2.45]])} stroke="#483d8b" strokeWidth="2.500" strokeDasharray="9 4" />
      <polyline points={line(fastAverage)} stroke="#00008b" strokeWidth="2.500" />
      <polyline points={line(zigzag)} stroke="#0000ff" strokeWidth="1.500" />
      <polyline points={line([[52, 1.9], [101, 7.55]])} stroke="#ba55d3" strokeWidth="1.500" />
    </g>

    <g shapeRendering="crispEdges">
      <VLine x={34} y={50} h={298} />
      <VLine x={947} y={50} h={298} />
      <HLine x={0} y={345} w={1008} />
      <HLine x={34} y={521} w={914} />
      <HLine x={0} y={445} w={22} />
      {hourLines.map((x) => (
        <VLine key={x} x={x} y={522} h={5} />
      ))}
      {[56, 86, 145, 205, 235, 264, 294, 324].map((y) => (
        <HLine key={y} x={948} y={y} w={6} />
      ))}
    </g>

    <g fill="#111">
      <text x="37" y="61">
        SMA(ES 06-17 (15 Min),260), SMA(ES 06-17 (15 Min),35), RegressionChannel(ES 06-17 (15 Min),50,4.1), PriorDayOHLC(ES
        06-17 (15 Min)), ZigZag(ES 06-17 (15 Min),Points,0.34,True
      </text>
      {[[14, 57], [12, 87], [8, 146], [4, 206], [2, 236], [0, 265], [-2, 295]].map(([p, y]) => (
        <text key={p} x="955" y={y + 4}>{(2380 + p).toFixed(2)}</text>
      ))}
      {hourLines.map((x, i) => (
        <text key={x} x={x} y="538" textAnchor="middle">{hourLabels[i]}</text>
      ))}
      <RightTag x={948} y={104} text="2390.75" fill="#008000" color="#fff" wide={49} />
      <RightTag x={948} y={119} text="2389.75" fill="#fff" color="#111" wide={49} />
      <RightTag x={948} y={186} text="2385.26" fill="#00008b" color="#fff" wide={49} />
      <RightTag x={948} y={179} text="2385.75" fill="#000" color="#fff" wide={49} />
      <RightTag x={948} y={199} text="2384.41" fill="#d2691e" color="#111" wide={49} />
      <RightTag x={948} y={220} text="2383.00" fill="#ffa500" color="#111" wide={49} />
      <RightTag x={948} y={324} text="2376.00" fill="#ff0000" color="#fff" wide={49} />
      <rect x="-1" y="374.500" width="23" height="13" fill="#00008b" stroke="#000" />
      <text x="0" y="385" fill="#fff">24.1</text>
      <text x="-2" y="486">5000</text>
      <rect x="1.500" y="503.500" width="21" height="13" fill="#9932cc" stroke="#000" />
      <text x="3" y="514" fill="#fff">934</text>
    </g>
  </svg>
);

// ---------------------------------------------------------------- taskbar

const taskIcons = {
  ie: (
    <>
      <path d="M13.500 10.500A5.500 5.500 0 1 1 13.500 8H4" fill="none" stroke="#2a7fd4" strokeWidth="2.500" />
      <path d="M1 14Q-1 9 7 4t9-2" fill="none" stroke="#f2b632" strokeWidth="1.500" />
    </>
  ),
  paint: (
    <>
      <ellipse cx="7" cy="9" rx="6.500" ry="5.500" fill="#d8ebf5" stroke="#7fa9c4" />
      <circle cx="4" cy="8" r="1.500" fill="#d8432f" />
      <circle cx="8" cy="6" r="1.500" fill="#48ad3b" />
      <circle cx="5" cy="12" r="1.500" fill="#3a72c8" />
      <circle cx="9" cy="11" r="1.500" fill="#e6a72e" />
      <path d="M13 1l1 14" stroke="#e88d32" strokeWidth="2.500" />
    </>
  ),
  search: (
    <>
      <rect x="4" y="1.500" width="11" height="8" fill="#1f4fc4" stroke="#9aa4b8" />
      <path d="M8 12h6" stroke="#9aa4b8" strokeWidth="2" />
      <circle cx="5" cy="7" r="4" fill="#b9cde6" stroke="#7485a3" />
      <path d="M8 10l4 5" stroke="#8a6a52" strokeWidth="2" />
    </>
  ),
  doc: (
    <>
      <rect x="1.500" y="0.500" width="12" height="13" fill="#e8f2fc" stroke="#4a86c8" />
      <path d="M4 7l1.500-4L7 7M9 3h3M9 6h3M3 9h9M3 11h9" stroke="#3a76b8" fill="none" />
      <path d="M1 15h14" stroke="#6b93bf" strokeWidth="1.500" />
    </>
  ),
  folder: (
    <>
      <path d="M1 14V2h5l1 2h8v10z" fill="#f6dd7c" stroke="#c6a33c" />
      <path d="M4 15V9h8v6h-2v-3H6v3z" fill="#8cc8ee" stroke="#4a92c4" />
    </>
  ),
  book: (
    <>
      <path d="M0 12h16v3H0z" fill="#f7e400" />
      <path d="M1 2l6 2 1 9-6-2zM15 2L9 4 8 13l6-2z" fill="#fff" stroke="#000" />
      <path d="M3 5l3 1M3 8l3 1M10 6l3-1M10 9l3-1" stroke="#000" />
    </>
  ),
  cube: (
    <>
      <path d="M1 8l6-6 8 3-5 9z" fill="#111" />
      <path d="M3 8l3-3 2 2-3 3z" fill="#e11" />
      <path d="M7 4l4 1-1 2-3-1z" fill="#1b2fd0" />
      <path d="M9 8l4-2-2 4z" fill="#a01fc0" />
      <path d="M6 10l3 1 1 2-3-1z" fill="#18a828" />
    </>
  ),
  reader: (
    <>
      <path d="M0 12h16v3H0z" fill="#f7e400" />
      <path d="M2 12l2-8 4-3 5 3 1 8z" fill="#e6e6e6" stroke="#000" />
      <path d="M5 5h2M9 5h2M5 8h6" stroke="#000" strokeWidth="1.500" />
      <path d="M4 11h3" stroke="#c0f" strokeWidth="2" />
      <path d="M9 11h3" stroke="#0a4" strokeWidth="2" />
    </>
  ),
  wave: (
    <path d="M0 9q2-8 5-4t5 6 5-4M3 5q4-3 6 3" fill="none" stroke="#a8282c" strokeWidth="1.500" />
  ),
  panel: (
    <>
      <path d="M2.500 1.500h10l1 2v11h-11z" fill="#fff" stroke="#000" />
      <path d="M4 5h8" stroke="#00a" strokeWidth="2" />
      <rect x="4.500" y="8.500" width="7" height="4" fill="#fff" stroke="#00a" />
      <path d="M6 10h2v1H6z" fill="#e11" />
    </>
  ),
  mic: (
    <>
      <rect x="2" y="1" width="5" height="6" rx="2" fill="#777" />
      <path d="M5 7l1 6q1 3 4 2t2-4" fill="none" stroke="#555" strokeWidth="1.500" />
    </>
  ),
  globe: (
    <>
      <path d="M0 13h16v2H0z" fill="#f7e400" stroke="#333" />
      <circle cx="8" cy="6" r="5.500" fill="#1fa88a" stroke="#134" />
      <path d="M4 4q3-3 5 0t3 4M6 9l3-2" stroke="#fff" fill="none" />
      <path d="M12 9l3 4" stroke="#222" strokeWidth="1.500" />
    </>
  ),
  bird: (
    <>
      <circle cx="8" cy="8" r="7" fill="#2a5fa8" />
      <path d="M3 9q5-7 10 0-3 5-7 3z" fill="#e8eef5" />
      <path d="M3 5q5-5 10 1" stroke="#5c9fe0" strokeWidth="2" fill="none" />
    </>
  ),
  phones: (
    <>
      <path d="M2 11V7q1-6 6-6t6 6v4" fill="none" stroke="#777" strokeWidth="1.500" />
      <rect x="2" y="9" width="4" height="6" rx="1" fill="#333" />
      <rect x="10" y="9" width="4" height="6" rx="1" fill="#333" />
    </>
  ),
  people: (
    <>
      <path d="M0 15h15" stroke="#e6b800" strokeWidth="2" />
      <path d="M2 14V5l2-4 2 4v9z" fill="#e11" stroke="#800" />
      <path d="M8 14l1-9 4-3-2 6 2 6z" fill="#fff" stroke="#000" />
      <path d="M9 4l5-2M10 9l5-5" stroke="#1b2fd0" strokeWidth="2" />
    </>
  ),
  notepad: (
    <>
      <path d="M3.500 2.500h11l-2 12h-11z" fill="#a8dbe4" stroke="#5b9aa8" />
      <path d="M4 5h9M4 8h8M3 11h9" stroke="#e8f8fa" />
      <path d="M4 1v3M7 1v3M10 1v3M13 1v3" stroke="#667" />
    </>
  ),
  scissors: (
    <>
      <ellipse cx="7" cy="5" rx="6" ry="4" fill="#fff" stroke="#d2543c" strokeWidth="1.500" />
      <path d="M6 2l6 9M11 2L8 11" stroke="#888" strokeWidth="1.500" />
      <circle cx="8" cy="13" r="2" fill="none" stroke="#2f86b4" strokeWidth="1.500" />
      <circle cx="13" cy="12" r="2" fill="none" stroke="#2f86b4" strokeWidth="1.500" />
    </>
  ),
  fox: (
    <>
      <circle cx="8" cy="8" r="7.500" fill="#e8741c" />
      <circle cx="8" cy="6" r="4.500" fill="#2a6fc0" />
      <path d="M2 5q0 8 7 8 5-1 5-6-2 3-5 2-4 1-4-3z" fill="#f6a428" />
    </>
  ),
  pointer: (
    <>
      <rect x="0" y="0" width="16" height="16" fill="#5a10b8" />
      <path d="M0 0h16v8H0z" fill="#1414e0" />
      <path d="M5 2l3 5 3 1v5H8L6 9l2-1z" fill="#fff" />
    </>
  ),
};

const taskOrder = [
  ["ie", "Internet Explorer"], ["paint", "Paint"], ["search", "Search"], ["doc", "Document"], ["folder", "Explorer"],
  ["book", "Book"], ["cube", "Cube"], ["reader", "Reader"], ["wave", "NinjaTrader"], ["panel", "Panel"], ["mic", "Microphone"],
  ["globe", "Globe"], ["bird", "Thunderbird"], ["phones", "Headphones"], ["people", "People"], ["notepad", "Notepad"],
  ["scissors", "Snipping Tool"], ["fox", "Firefox"], ["pointer", "Pointer"],
];

const raised = "border border-t-white border-r-[#404040] border-b-[#404040] border-l-white";
const pressed = "border border-t-[#404040] border-r-white border-b-white border-l-[#404040] bg-[#f4f2ee]";

const TaskButton = ({ id, label, up, stack }) => {
  const look = id === "wave" ? pressed : up ? raised : "";
  return (
    <div className="flex h-[22px] w-[34px] items-stretch justify-center">
      <button type="button" aria-label={label} className={`${look} flex items-center justify-center ${stack ? "w-[24px]" : "w-[32px]"}`}>
        <svg width="16" height="16" viewBox="0 0 16 16" aria-hidden="true">{taskIcons[id]}</svg>
      </button>
      {stack && <span className={`w-[4px] border-r ${id === "wave" ? "border-white" : "border-[#404040]"}`} />}
      {stack && <span className={`w-[4px] border-r ${id === "wave" ? "border-white" : "border-[#404040]"}`} />}
    </div>
  );
};

const Taskbar = ({ shift, time, up, stacks, trayWidth }) => (
  <div className="flex h-[29px] items-center overflow-hidden border-t border-[#d4d0c8] bg-[#d4d0c8] pt-[2px] shadow-[inset_0_1px_0_#fff]">
    <div className={`${shift} flex items-center`}>
      <button
        type="button"
        className={`${raised} mr-[9px] ml-[2px] flex h-[22px] w-[52px] items-center gap-[2px] text-[11px] font-bold text-black`}
      >
        <svg width="16" height="16" viewBox="0 0 16 16" className="shrink-0" aria-hidden="true">
          <path d="M2 4q3-2 5 0l-1 4Q4 7 1 8z" fill="#e2592c" />
          <path d="M8 4q3 2 6 0l-1 5q-3 1-6-1z" fill="#6fb52c" />
          <path d="M1 9q3-1 5 0l-1 4q-2-1-5 0z" fill="#3a7ad0" />
          <path d="M7 9q3 2 5 1l-1 4q-3 1-5-1z" fill="#f2c12c" />
        </svg>
        Start
      </button>
      {taskOrder.map(([id, label]) => (
        <TaskButton key={id} id={id} label={label} up={up.includes(id)} stack={stacks.includes(id)} />
      ))}
    </div>
    <div className={`${trayWidth} ml-auto flex h-[22px] shrink-0 items-center border border-r-0 border-t-[#808080] border-b-white border-l-[#808080] pl-[6px] text-[11px] text-black`}>
      <svg width="7" height="8" viewBox="0 0 7 8" fill="none" stroke="#000" aria-hidden="true">
        <path d="M1 3.500L3.500 1 6 3.500M1 7.500L3.500 5 6 7.500" strokeWidth="1.200" />
      </svg>
      <time className="ml-[13px] w-[50px] shrink-0 whitespace-nowrap">{time}</time>
      <svg width="16" height="13" viewBox="0 0 16 13" className="shrink-0" aria-hidden="true">
        <rect x="0.500" y="0.500" width="15" height="9" fill="#2a6fd0" stroke="#9ab6dc" />
        <path d="M0 10l7-2 9 2v2H4z" fill="#26334a" />
        <path d="M2 10l2-2 2 3z" fill="#e8d84a" />
      </svg>
    </div>
  </div>
);

// ---------------------------------------------------------------- data box

const DataBox = () => (
  <aside className="absolute top-[37px] bottom-0 left-[212px] flex w-[168px] flex-col border-t border-r border-l border-t-white border-r-[#404040] border-l-[#d4d0c8] bg-[#d4d0c8] px-[2px] pt-[2px]">
    <div className="flex h-[20px] items-center bg-linear-to-r from-[#808080] to-[#c0c0c0] pr-[2px] pl-[2px]">
      <h3 className="text-[11px] font-bold text-[#d4d0c8]">Data Box</h3>
      <button
        type="button"
        aria-label="Close data box"
        className={`${raised} ml-auto flex h-[15px] w-[10px] items-center justify-center bg-[#d4d0c8]`}
      >
        <svg width="5" height="5" viewBox="0 0 5 5" stroke="#000" aria-hidden="true">
          <path d="M0 0l5 5M5 0L0 5" />
        </svg>
      </button>
    </div>
    <div className="grow border-t border-l border-[#404040] bg-[#a9a9a9]">
      <table className="w-[143px] table-fixed border-collapse font-['Liberation_Sans',Arial,sans-serif] text-[11px] leading-[18px] text-[#111]">
        <thead>
          <tr className="h-[19px] bg-black text-left text-white">
            <th className="border border-black pl-[5px] font-normal">Date</th>
            <td className="border border-black pl-[5px]">5/5/2017</td>
          </tr>
        </thead>
        <tbody>
          <tr className="h-[19px] bg-[#708090] text-white">
            <th colSpan="2" className="border border-black font-['Noto_Sans',sans-serif] font-bold">Panel 1</th>
          </tr>
          <tr className="h-[19px] bg-[#d4d0c8]">
            <th colSpan="2" className="border border-black font-normal">ES 06-17 / 1 Min</th>
          </tr>
          {dataRows.map(([name, value]) => (
            <tr key={name} className="h-[19px] bg-white text-left">
              <th className="border border-black pl-[5px] font-normal">{name}</th>
              <td className="border border-black pl-[5px]">{value}</td>
            </tr>
          ))}
          <tr className="h-[19px] bg-[#d4d0c8]">
            <th colSpan="2" className="border border-black font-normal">VOL(ES 06-17 (1 Min))</th>
          </tr>
          <tr className="h-[19px] bg-white text-left">
            <th className="border border-black bg-[#0000ff] pl-[5px] font-normal">Volume</th>
            <td className="border border-black pl-[5px]">1895</td>
          </tr>
        </tbody>
      </table>
    </div>
  </aside>
);

const note = "font-['Liberation_Serif','Times_New_Roman',serif] text-[15px] leading-[19px] whitespace-nowrap text-black";

// ---------------------------------------------------------------- page

const openTasks = ["paint", "folder", "book", "reader", "notepad", "fox", "pointer"];

const App = () => (
  <main className="bg-white pb-6 font-['Noto_Sans',Tahoma,sans-serif]">
    {/* 7:47 AM */}
    <section className="relative">
      <div className="flex">
        <div className="grow border-r-2 border-[#606060]">
          <div className="border-r-2 border-[#d4d0c8]">
            <TitleBar title="ES 06-17 (1 Min)  5/5/2017" shift="ml-0" />
            <Toolbar period="1 Min" shift="ml-0" magnifier trader />
            <div className="relative">
              <MinuteChart
                offset={0}
                width={1016}
                base={969.9}
                first={391}
                last={468}
                ticks={[[400, "06:40"], [430, "07:10"], [440, "07:20"], [450, "07:30"], [460, "07:40"], [470, "07:50"]]}
                cross={[665, 357]}
                crossTime={[650, "07:30"]}
                left={[292.5, 27, "975"]}
                tip={[6.5, "-7642.08", "2383.25"]}
              >
                <SkipIcon />
                <path d="M862 301.500H940" stroke="#008080" />
                <path d="M790.500 295.500H857l5 6.500-5 6.500H790.500zM809.500 295v13" fill="#00ff00" stroke="#000" />
                <text x="797" y="306">1</text>
                <text x="811" y="306">Buy LMT</text>
                <rect x="940.500" y="295.500" width="13" height="13" fill="#fff" stroke="#000" />
                <path d="M942 297l10 10M952 297l-10 10" stroke="#f00" strokeWidth="2" />
                <RightTag x={955} y={200} text="2390.00" fill="#000" color="#fff" />
                <RightTag x={955} y={301.5} text="2385.75" fill="#008080" color="#fff" />
              </MinuteChart>
              <FixedButton className="left-[2px]" />
              <FixedButton className="right-[25px]" />
              <ChartMenuButton />
              <div className="absolute top-[43px] left-[408px] h-[126px] w-[244px] border-[5px] border-[#ff7f27] p-[12px] pt-[10px]">
                <p className={`${note} h-[100px] w-[204px] bg-white`}>
                  The bar in the box 7:30 is 7:29 to
                  <br />
                  7:30am. The next bar's low is
                  <br />
                  2386.50. So to get a fill on
                  <br />
                  Yclose you would hve to be a bit
                  <br />
                  earlier like 7:21
                </p>
              </div>
            </div>
          </div>
        </div>
        <div className="w-[4px] shrink-0 border-l border-white bg-[#c9c6bf]" />
      </div>
      <Taskbar shift="ml-0" time="7:47 AM" up={openTasks.slice(1)} stacks={["wave", "pointer"]} trayWidth="w-[96px]" />
      <DataBox />
    </section>

    {/* 8:17 AM */}
    <section className="mt-[52px] mr-4">
      <div className="border-r-2 border-[#606060]">
        <div className="border-r-2 border-[#d4d0c8]">
          <TitleBar title="ES 06-17 (1 Min)  5/5/2017" shift="-ml-3" />
          <Toolbar period="1 Min" shift="-ml-3" trader />
          <div className="relative overflow-hidden">
            <MinuteChart
              offset={12}
              width={1004}
              base={768.7}
              first={410}
              last={498}
              ticks={[
                [410, "06:50"], [420, "07:00"], [430, "07:10"], [440, "07:20"], [450, "07:30"], [460, "07:40"],
                [470, "07:50"], [480, "08:00"], [490, "08:10"],
              ]}
              cross={[275, 464]}
              crossTime={[261, "07:11"]}
              left={[297.5, 27.5, "342"]}
              tip={[2, "-22114.7", "2378.75"]}
            >
              <clipPath id="plot">
                <rect x="55" y="50" width="900" height="503" />
              </clipPath>
              <g clipPath="url(#plot)">
                <SellMark x={951} />
              </g>
              <path d="M862 212H955" stroke="#deb887" strokeWidth="2" />
              <rect x="796.500" y="206.500" width="48" height="12" fill="#000" stroke="#000" />
              <rect x="844.500" y="206.500" width="18" height="12" fill="#f00" stroke="#000" />
              <text x="803" y="217" fill="#00ff00">$12.50</text>
              <text x="850" y="217" fill="#fff">1</text>
              <RightTag x={955} y={212} text="2389.50" fill="#deb887" color="#111" />
              <RightTag x={955} y={217} text="2389.25" fill="#000" color="#fff" />
            </MinuteChart>
            <FixedButton className="-left-[10px]" />
            <FixedButton className="right-[25px]" />
            <ChartMenuButton />
            <p className={`${note} absolute top-[23px] left-[331px] h-[84px] w-[192px] bg-white`}>
              Sold 8:15am
              <br />
              Reason mini double top at
              <br />
              2390.75, 2390.50
            </p>
          </div>
        </div>
      </div>
      <Taskbar shift="-ml-3" time="8:17 AM" up={openTasks} stacks={["wave", "pointer"]} trayWidth="w-[92px]" />
    </section>

    {/* 8:33 AM */}
    <section className="mt-[68px] mr-4">
      <TitleBar title="ES 06-17 (15 Min)  5/5/2017" shift="-ml-4" restore />
      <Toolbar period="15 Min" shift="-ml-4" account />
      <div className="relative">
        <QuarterChart />
        <p className={`${note} absolute top-[315px] left-[97px]`}>8:33am</p>
        <p className={`${note} absolute top-[320px] left-[378px]`}>
          Charts still loading..
          <br />
          Here is a 15 min
        </p>
      </div>
      <div className="flex h-[25px] bg-[#ebe9e5]">
        <div className={`${raised} ml-auto w-[47px] bg-[#d4d0c8]`} />
        <button type="button" aria-label="Scroll right" className={`${raised} flex w-[16px] items-center justify-center bg-[#d4d0c8]`}>
          <svg width="4" height="7" viewBox="0 0 4 7" aria-hidden="true">
            <path d="M0 0v7l4-3.500z" fill="#000" />
          </svg>
        </button>
      </div>
      <div className="h-[4px] border-t border-b-2 border-[#d4d0c8]" />
    </section>

    {/* 8:45 AM */}
    <section className="mt-[80px] mr-7">
      <div className="border-r-2 border-[#606060]">
        <div className="border-r-2 border-[#d4d0c8]">
          <TitleBar title="ES 06-17 (1 Min)  5/5/2017" shift="-ml-6" />
          <Toolbar period="1 Min" shift="-ml-6" trader />
          <div className="relative overflow-hidden">
            <MinuteChart
              offset={24}
              width={992}
              base={158.5}
              first={471}
              last={526}
              ticks={[
                [480, "08:00"], [490, "08:10"], [500, "08:20"], [510, "08:30"], [520, "08:40"], [530, "08:50"],
                [540, "09:00"], [550, "09:10"],
              ]}
              cross={[448, 339]}
              crossTime={[433, "08:28"]}
              left={[260, 18, "5497"]}
              tip={[8, "-5107.43", "2384.25"]}
            >
              <SkipIcon />
              <SellMark x={341} />
              <path d="M620 243v9l5-4.500zM631 243v9l-5-4.500z" fill="#1a1aff" stroke="#1a1aff" />
              <path d="M625.500 259l5 6h-2.500v9h-5v-9h-2.500z" fill="#1414ff" />
              <g textAnchor="middle">
                <text x="625" y="288">Close</text>
                <text x="625" y="300">1 @ 2388.00</text>
                <text x="625" y="312">Buy</text>
                <text x="625" y="324">1 @ 2388.00</text>
              </g>
              <path d="M863 247H955" stroke="#deb887" strokeWidth="2" />
              <rect x="802.500" y="241.500" width="41" height="13" fill="#000" stroke="#000" />
              <rect x="843.500" y="241.500" width="19" height="13" fill="#00ff00" stroke="#000" />
              <text x="809" y="252" fill="#f00">$0.00</text>
              <text x="850" y="252">1</text>
              <RightTag x={955} y={247} text="2388.00" fill="#000" color="#fff" />
            </MinuteChart>
            <FixedButton className="right-[25px]" />
            <ChartMenuButton />
            <p className={`${note} absolute top-[292px] left-[349px] h-[97px] w-[288px] bg-white`}>
              CAR 2388
              <br />
              Reason: think it will bounce to explore o/n high
            </p>
          </div>
        </div>
      </div>
      <Taskbar shift="-ml-6" time="8:45 AM" up={openTasks} stacks={["wave", "notepad", "pointer"]} trayWidth="w-[92px]" />
    </section>
  </main>
);

export default App;
